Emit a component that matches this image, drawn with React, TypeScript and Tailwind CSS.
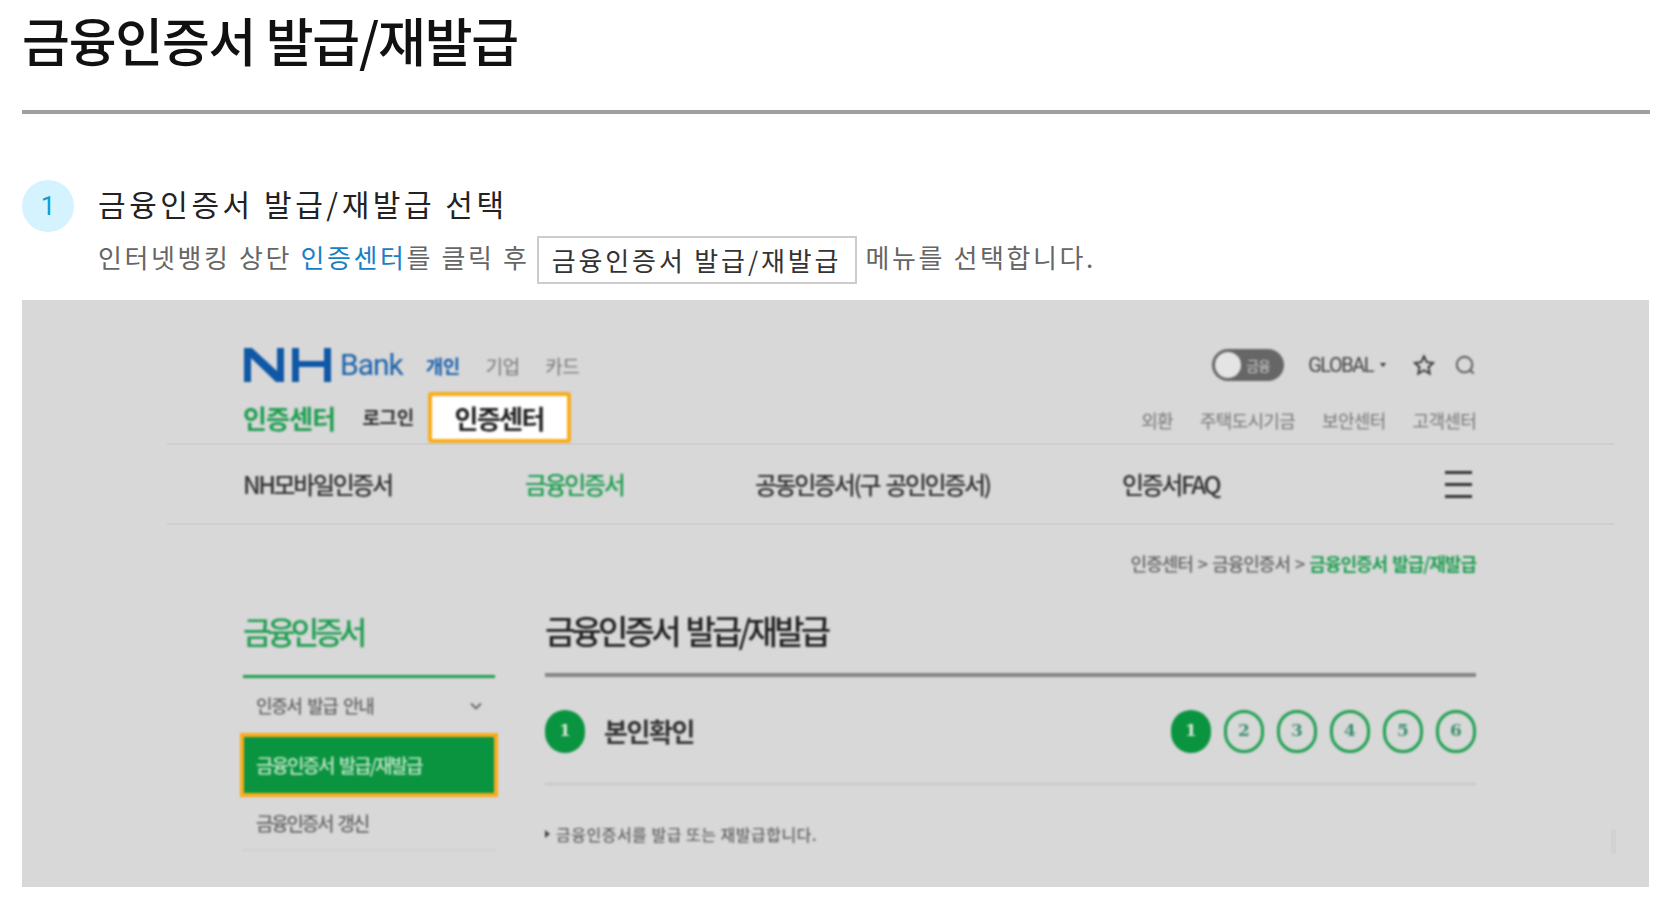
const ko = "font-['Noto_Sans_CJK_KR','Noto_Sans',sans-serif]";

const subLinks = ['외환', '주택도시기금', '보안센터', '고객센터'];
const steps = [2, 3, 4, 5, 6];

function NhLogo() {
  return (
    <svg width="90" height="36" viewBox="0 0 90 36" className="block">
      <polygon points="1,35 1,1 9,1 34,24 34,1 41,1 41,35 33,35 8,11 8,35" fill="#0f58a6" />
      <rect x="49" y="1" width="7" height="34" fill="#0f58a6" />
      <rect x="81" y="1" width="7" height="34" fill="#0f58a6" />
      <rect x="49" y="14" width="39" height="6" fill="#0f58a6" />
    </svg>
  );
}

function PanelHeader() {
  return (
    <div className="ml-[145px] w-[1447px]">
      <div className="pl-[76px] pr-[137px] blur-[0.8px]">
        <div className="flex h-[45px] items-start justify-between">
          <div className="flex items-center">
            <NhLogo />
            <span className="ml-[7px] text-[30px] leading-[36px] tracking-[-1px] text-[#1c62ab] font-['Roboto',sans-serif]">Bank</span>
            <span className="ml-[23px] mt-[3px] text-[19px] font-bold tracking-[-0.6px] text-[#1c62ab]">개인</span>
            <span className="ml-[26px] mt-[3px] text-[19px] tracking-[-0.6px] text-[#777]">기업</span>
            <span className="ml-[26px] mt-[3px] text-[19px] tracking-[-0.6px] text-[#777]">카드</span>
          </div>
          <div className="mr-[1px] flex items-center pt-[2px]">
            <div className="flex h-[32px] w-[72px] items-center rounded-full bg-[#666] pl-[3px]">
              <span className="h-[26px] w-[26px] rounded-full bg-[#e4e4e4]" />
              <span className="ml-[5px] text-[14px] leading-none tracking-[-1px] text-[#ccc]">금융</span>
            </div>
            <span className="ml-[24px] text-[20px] leading-none tracking-[-1.5px] text-[#444] font-['Roboto',sans-serif]">GLOBAL</span>
            <span className="ml-[7px] h-0 w-0 border-x-[3px] border-t-[4px] border-x-transparent border-t-[#333]" />
            <svg width="22" height="22" viewBox="0 0 24 24" fill="none" stroke="#333" strokeWidth="2" className="ml-[27px]">
              <polygon points="12,2.5 15,9 22,9.7 16.8,14.4 18.3,21.5 12,17.8 5.7,21.5 7.2,14.4 2,9.7 9,9" />
            </svg>
            <svg width="22" height="22" viewBox="0 0 24 24" fill="none" stroke="#555" strokeWidth="2" className="ml-[19px]">
              <circle cx="11.5" cy="11.5" r="8.5" />
              <path d="M18 18l3.5 3.5" />
            </svg>
          </div>
        </div>
        <div className="flex h-[51px] items-start justify-between">
          <div className="flex items-center">
            <span className="text-[26px] font-bold leading-[51px] tracking-[-0.8px] text-[#1e9e50]">인증센터</span>
            <span className="ml-[27px] text-[19px] font-bold tracking-[-0.4px] text-[#333]">로그인</span>
            <span className="ml-[14px] flex h-[51px] w-[143px] items-center justify-center rounded-[3px] border-[4px] border-[#f9ac1d] bg-white text-[26px] font-bold tracking-[-1.6px] text-[#222]">인증센터</span>
          </div>
          <div className="mr-[1px] flex items-center gap-[27px] pt-[15px] text-[18px] leading-[26px] tracking-[-0.7px] text-[#777]">
            {subLinks.map(link => <span key={link}>{link}</span>)}
          </div>
        </div>
      </div>
      <div className="h-[2px] bg-[#cfcfcf]" />
      <div className="flex h-[78px] items-center pl-[76px] pr-[142px] text-[24px] font-medium tracking-[-2.4px] text-[#333] blur-[0.8px]">
        <span className="w-[282px]">NH모바일인증서</span>
        <span className="w-[230px] text-[#1e9e50]">금융인증서</span>
        <span className="w-[367px] [word-spacing:3px]">공동인증서(구 공인인증서)</span>
        <span>인증서FAQ</span>
        <div className="ml-auto flex flex-col gap-[9px]">
          <span className="h-[3px] w-[27px] bg-[#333]" />
          <span className="h-[3px] w-[27px] bg-[#333]" />
          <span className="h-[3px] w-[27px] bg-[#333]" />
        </div>
      </div>
      <div className="h-[2px] bg-[#cfcfcf]" />
    </div>
  );
}

function Sidebar() {
  return (
    <div className="w-[252px] shrink-0">
      <div className="h-[67px] pt-[2px] text-[31px] font-medium leading-[42px] tracking-[-4.6px] text-[#1e9e50]">금융인증서</div>
      <div className="h-[3px] bg-[#1e9e50]" />
      <div className="flex h-[55px] items-center justify-between pl-[13px] pr-[13px] text-[18px] font-medium tracking-[-1.4px] text-[#666] [word-spacing:3px]">
        <span>인증서 발급 안내</span>
        <svg width="12" height="8" viewBox="0 0 12 8" fill="none" stroke="#666" strokeWidth="1.8"><path d="M1 1.5l5 5 5-5" /></svg>
      </div>
      <div className="-mx-[3px] flex h-[64px] items-center border-[4px] border-[#f9ac1d] bg-[#0a9440] pl-[12px] text-[19px] font-medium tracking-[-2px] text-[#c5e6c9] [word-spacing:3px]">금융인증서 발급/재발급</div>
      <div className="flex h-[52px] items-center pl-[13px] text-[19px] font-medium tracking-[-2.2px] text-[#666] [word-spacing:3px]">금융인증서 갱신</div>
      <div className="h-[2px] bg-[#cfcfcf]" />
    </div>
  );
}

function MainArea() {
  return (
    <div className="ml-[50px] w-[931px]">
      <div className="h-[65px] pt-[2px] text-[33px] font-medium leading-[40px] tracking-[-3.8px] text-[#222] [word-spacing:4px]">금융인증서 발급/재발급</div>
      <div className="h-[4px] bg-[#858585]" />
      <div className="flex h-[106px] items-center">
        <span className="mt-[2px] flex h-[43px] w-[40px] items-center justify-center rounded-full bg-[#0a9440] text-[17px] font-bold text-[#d8e8d8] font-['DejaVu_Serif',serif]">1</span>
        <span className="ml-[19px] text-[26px] font-bold tracking-[-1.4px] text-[#333]">본인확인</span>
        <div className="ml-auto mt-[2px] flex gap-[13px]">
          <span className="flex h-[43px] w-[40px] items-center justify-center rounded-full bg-[#0a9440] text-[17px] font-bold text-[#d8e8d8] font-['DejaVu_Serif',serif]">1</span>
          {steps.map(step => (
            <span key={step} className="flex h-[43px] w-[40px] items-center justify-center rounded-full border-[3px] border-[#1ea050] text-[17px] font-bold text-[#3f8f70] font-['DejaVu_Serif',serif]">{step}</span>
          ))}
        </div>
      </div>
      <div className="h-[2px] bg-[#c4c4cc]" />
      <div className="flex items-center pt-[36px] text-[16px] leading-[26px] font-medium tracking-[0.5px] text-[#666]">
        <span className="mr-[6px] h-0 w-0 border-y-[4px] border-l-[5px] border-y-transparent border-l-[#444]" />
        <span>금융인증서를 발급 또는 재발급합니다.</span>
      </div>
    </div>
  );
}

export default function App() {
  return (
    <div className={`min-h-screen bg-white ${ko}`}>
      <div className="pl-[22px] pr-[18px]">
        <h1 className="h-[110px] pt-[6px] text-[52px] font-medium leading-[68px] tracking-[-1.2px] text-[#111]">금융인증서 발급/재발급</h1>
        <div className="h-[4px] bg-[#a0a0a0]" />

        <div className="mt-[66px] flex">
          <span className="flex h-[52px] w-[52px] shrink-0 items-center justify-center rounded-full bg-[#d5f3fe] text-[26px] text-[#0b9ed6] font-['Roboto',sans-serif]">1</span>
          <div className="ml-[24px]">
            <div className="h-[56px] pt-[1px] text-[30px] leading-[44px] tracking-[3.55px] text-[#222]">금융인증서 발급/재발급 선택</div>
            <div className="flex items-start text-[26px] leading-[40px] tracking-[2.6px] text-[#666]">
              <span className="pt-[1px]">인터넷뱅킹 상단 <span className="text-[#1a80c4]">인증센터</span>를 클릭 후</span>
              <span className="ml-[7px] flex h-[48px] w-[320px] items-center justify-center border-2 border-[#cccccc] tracking-[2.85px] text-[#333]">금융인증서 발급/재발급</span>
              <span className="ml-[9px] pt-[1px]">메뉴를 선택합니다.</span>
            </div>
          </div>
        </div>

        <div className="relative mt-[16px] h-[587px] w-[1627px] bg-[#d8d8d8] pt-[47px]">
          <PanelHeader />
          <div className="mt-[26px] flex h-[24px] w-[1454px] items-center justify-end text-[18px] font-medium tracking-[-1px] text-[#666] blur-[0.8px] [word-spacing:2px]">
            <span>인증센터 &gt; 금융인증서 &gt;&nbsp;</span>
            <span className="font-bold text-[#1e9e50]">금융인증서 발급/재발급</span>
          </div>
          <div className="ml-[221px] mt-[33px] flex w-[1233px] blur-[0.8px]">
            <Sidebar />
            <MainArea />
          </div>
          <span className="absolute left-[1589px] top-[529px] h-[25px] w-[5px] bg-[#d2d2d2]" />
        </div>
      </div>
    </div>
  );
}
